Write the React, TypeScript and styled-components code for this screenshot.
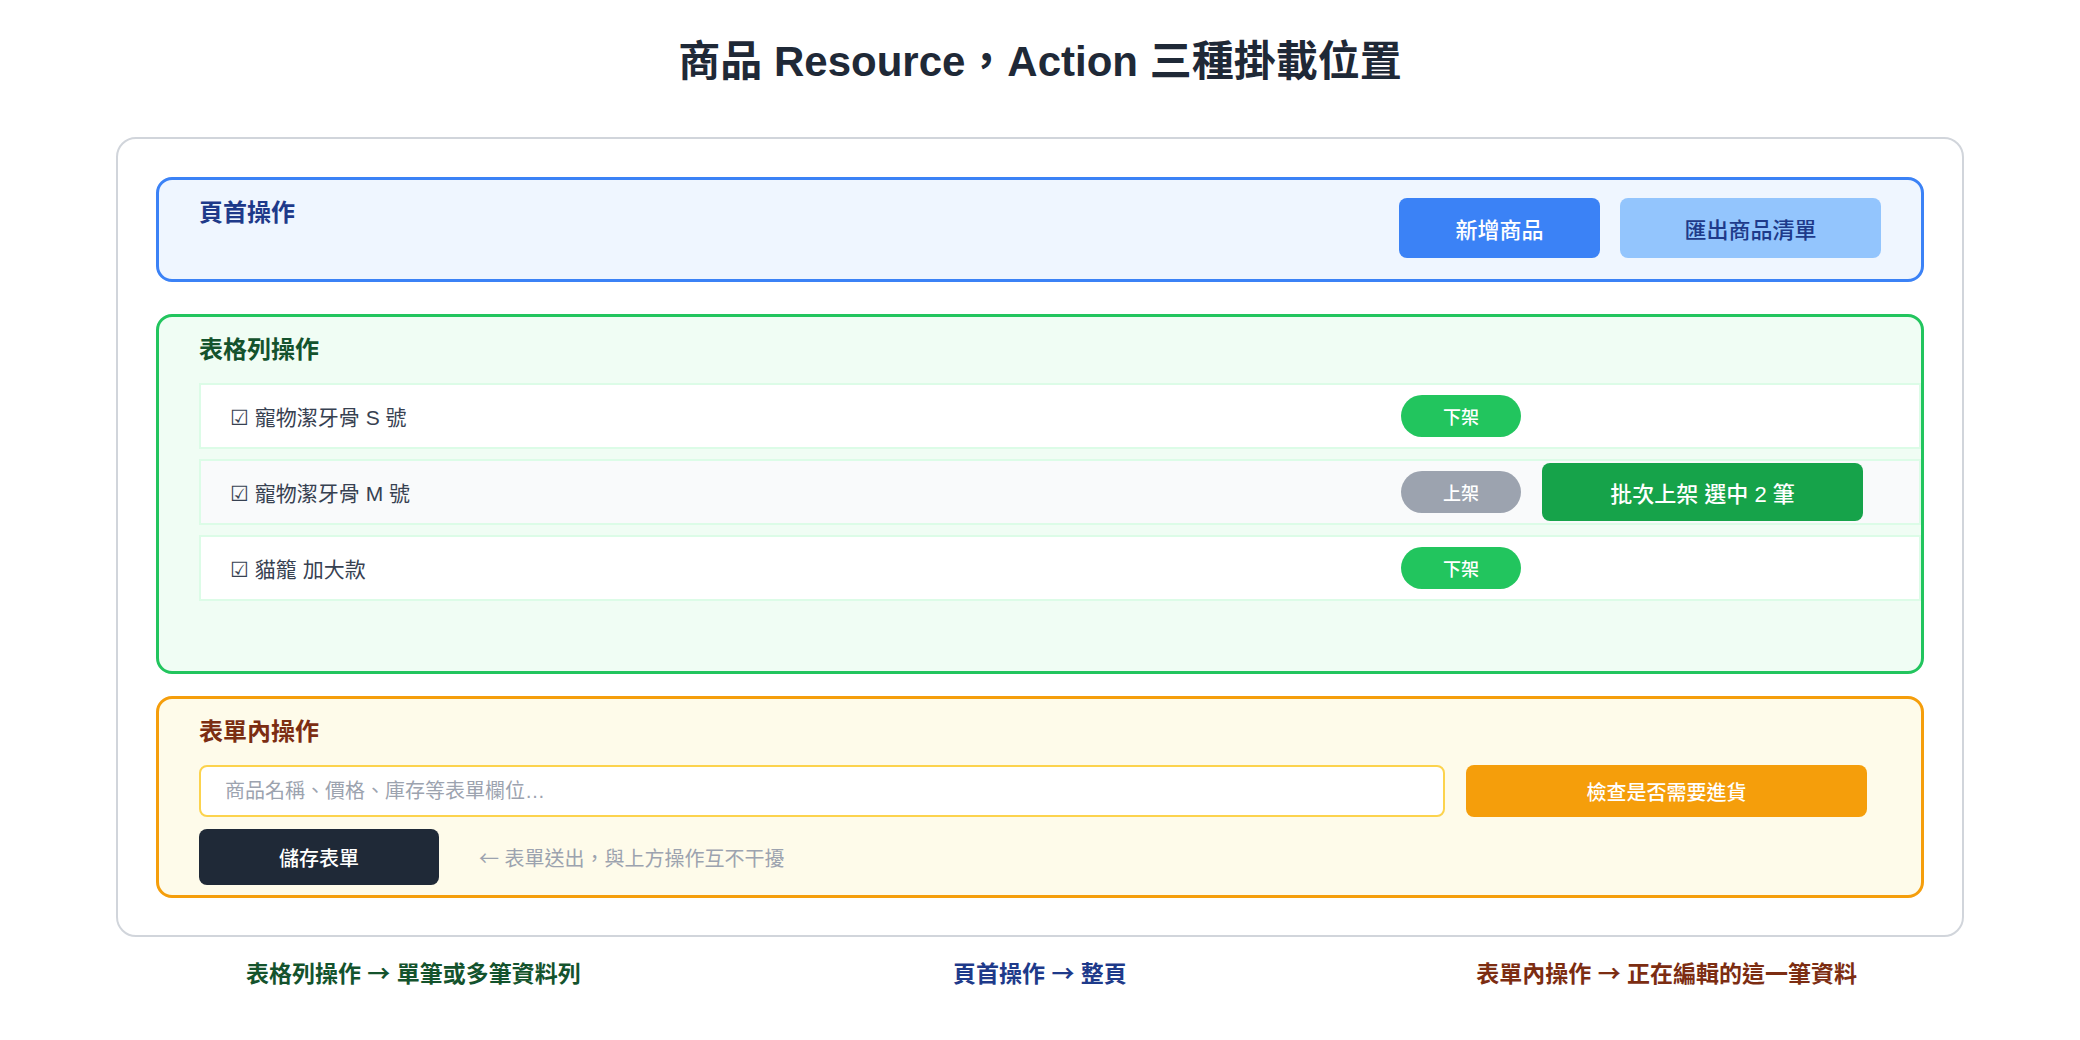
import styled, {createGlobalStyle} from "styled-components";
import React from "react";

const GlobalStyle = createGlobalStyle`
  body {
    margin: 0;
    background: #ffffff;
    font-family: "Liberation Sans", "Noto Sans CJK TC", sans-serif;
  }
`;

const Page = styled.div`
  width: 2080px;
  padding-top: 37px;
  display: flex;
  flex-direction: column;
  align-items: center;
`;

const Title = styled.h1`
  margin: 0 0 50px;
  font-size: 42px;
  line-height: 50px;
  font-weight: 700;
  color: #1f2937;
`;

const Card = styled.div`
  box-sizing: border-box;
  width: 1848px;
  padding: 38px 38px 37px;
  border: 2px solid #d1d5db;
  border-radius: 20px;
  display: flex;
  flex-direction: column;
`;

const Section = styled.section<{ $border: string; $bg: string; $gap: number; $pb: number }>`
  box-sizing: border-box;
  border: 3px solid ${p => p.$border};
  background: ${p => p.$bg};
  border-radius: 16px;
  padding: 18px 40px ${p => p.$pb}px;
  margin-bottom: ${p => p.$gap}px;
`;

const HeaderSection = styled(Section)`
  display: flex;
  justify-content: space-between;
  align-items: flex-start;
`;

const SectionTitle = styled.h2<{ $color: string }>`
  margin: 0;
  font-size: 24px;
  line-height: 30px;
  font-weight: 700;
  color: ${p => p.$color};
`;

const Buttons = styled.div`
  display: flex;
  gap: 20px;
`;

const Button = styled.button<{ $bg: string; $color: string; $w: number; $h: number; $size?: number }>`
  width: ${p => p.$w}px;
  height: ${p => p.$h}px;
  border: none;
  border-radius: 8px;
  background: ${p => p.$bg};
  color: ${p => p.$color};
  font-family: inherit;
  font-size: ${p => p.$size ?? 22}px;
  font-weight: 500;
  cursor: pointer;
`;

const Rows = styled.div`
  display: flex;
  flex-direction: column;
  gap: 10px;
  margin-top: 18px;
  margin-right: -40px;
`;

const Row = styled.div<{ $alt?: boolean }>`
  box-sizing: border-box;
  height: 66px;
  border: 2px solid #dcfce7;
  background: ${p => (p.$alt ? "#f9fafb" : "#ffffff")};
  padding-left: 29px;
  display: grid;
  grid-template-columns: 1150px 120px 321px;
  column-gap: 21px;
  align-items: center;
`;

const ItemName = styled.span`
  font-size: 21px;
  color: #374151;
`;

const Pill = styled.button<{ $bg: string }>`
  height: 42px;
  border: none;
  border-radius: 21px;
  background: ${p => p.$bg};
  color: #ffffff;
  font-family: inherit;
  font-size: 18px;
  font-weight: 500;
`;

const FormRow = styled.div<{ $mt: number }>`
  display: flex;
  align-items: center;
  gap: 21px;
  margin-top: ${p => p.$mt}px;
`;

const Input = styled.input`
  box-sizing: border-box;
  width: 1246px;
  height: 52px;
  border: 2px solid #fcd34d;
  border-radius: 8px;
  padding: 0 24px;
  font-family: inherit;
  font-size: 20px;
  color: #374151;
  &::placeholder {
    color: #9ca3af;
  }
`;

const Hint = styled.span`
  font-size: 20px;
  color: #9ca3af;
  margin-left: 19px;
`;

const Arrow = styled.span`
  font-family: "Noto Sans CJK TC", sans-serif;
`;

const Legend = styled.div`
  width: 1880px;
  margin-top: 20px;
  display: grid;
  grid-template-columns: repeat(3, 1fr);
`;

const LegendItem = styled.div<{ $color: string }>`
  text-align: center;
  font-size: 23px;
  line-height: 30px;
  font-weight: 700;
  color: ${p => p.$color};
`;

const items = [
  { name: "寵物潔牙骨 S 號", on: true },
  { name: "寵物潔牙骨 M 號", on: false },
  { name: "貓籠 加大款", on: true },
];

function App() {
  return <>
    <GlobalStyle/>
    <Page>
      <Title>商品 Resource，Action 三種掛載位置</Title>
      <Card>
        <HeaderSection $border="#3b82f6" $bg="#eff6ff" $gap={32} $pb={21}>
          <SectionTitle $color="#1e3a8a">頁首操作</SectionTitle>
          <Buttons>
            <Button $bg="#3b82f6" $color="#ffffff" $w={201} $h={60}>新增商品</Button>
            <Button $bg="#93c5fd" $color="#1e3a8a" $w={261} $h={60}>匯出商品清單</Button>
          </Buttons>
        </HeaderSection>

        <Section $border="#22c55e" $bg="#f0fdf4" $gap={22} $pb={70}>
          <SectionTitle $color="#14532d">表格列操作</SectionTitle>
          <Rows>
            {items.map((item, i) => <Row key={item.name} $alt={i === 1}>
              <ItemName>☑ {item.name}</ItemName>
              <Pill $bg={item.on ? "#22c55e" : "#9ca3af"}>{item.on ? "下架" : "上架"}</Pill>
              {i === 1 && <Button $bg="#16a34a" $color="#ffffff" $w={321} $h={58}>批次上架 選中 2 筆</Button>}
            </Row>)}
          </Rows>
        </Section>

        <Section $border="#f59e0b" $bg="#fefbea" $gap={0} $pb={10}>
          <SectionTitle $color="#7c2d12">表單內操作</SectionTitle>
          <FormRow $mt={18}>
            <Input placeholder="商品名稱、價格、庫存等表單欄位…"/>
            <Button $bg="#f59e0b" $color="#ffffff" $w={401} $h={52} $size={20}>檢查是否需要進貨</Button>
          </FormRow>
          <FormRow $mt={12}>
            <Button $bg="#1f2937" $color="#ffffff" $w={240} $h={56} $size={20}>儲存表單</Button>
            <Hint><Arrow>←</Arrow> 表單送出，與上方操作互不干擾</Hint>
          </FormRow>
        </Section>
      </Card>
      <Legend>
        <LegendItem $color="#14532d">表格列操作 <Arrow>→</Arrow> 單筆或多筆資料列</LegendItem>
        <LegendItem $color="#1e3a8a">頁首操作 <Arrow>→</Arrow> 整頁</LegendItem>
        <LegendItem $color="#7c2d12">表單內操作 <Arrow>→</Arrow> 正在編輯的這一筆資料</LegendItem>
      </Legend>
    </Page>
  </>;
}

export default App;
